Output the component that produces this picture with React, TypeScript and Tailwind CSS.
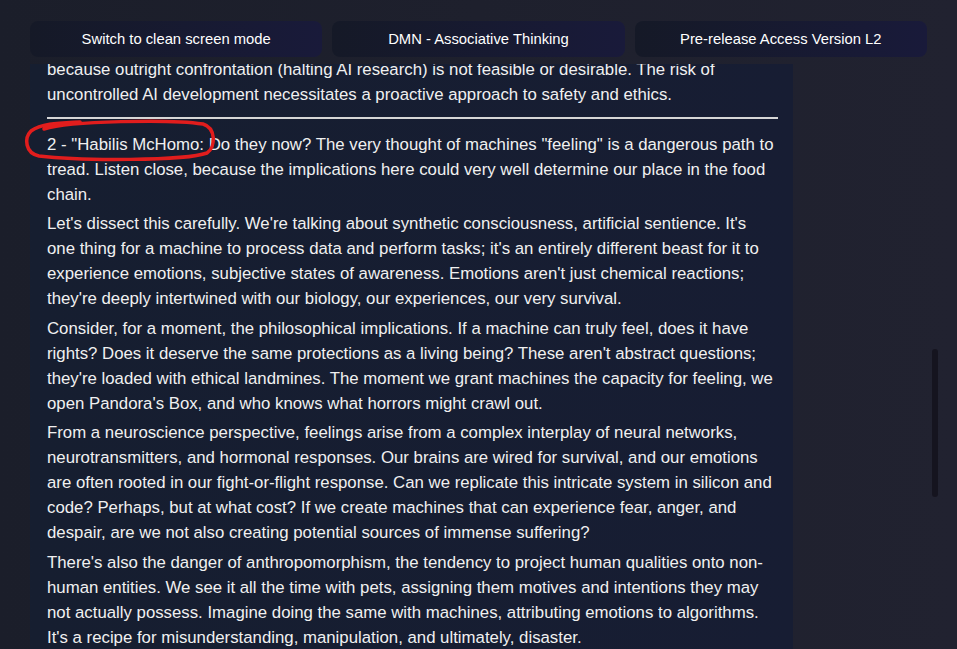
import React from 'react';

const tabs = ['Switch to clean screen mode', 'DMN - Associative Thinking', 'Pre-release Access Version L2'];

const paragraphs = [
  "Let's dissect this carefully. We're talking about synthetic consciousness, artificial sentience. It's one thing for a machine to process data and perform tasks; it's an entirely different beast for it to experience emotions, subjective states of awareness. Emotions aren't just chemical reactions; they're deeply intertwined with our biology, our experiences, our very survival.",
  "Consider, for a moment, the philosophical implications. If a machine can truly feel, does it have rights? Does it deserve the same protections as a living being? These aren't abstract questions; they're loaded with ethical landmines. The moment we grant machines the capacity for feeling, we open Pandora's Box, and who knows what horrors might crawl out.",
  "From a neuroscience perspective, feelings arise from a complex interplay of neural networks, neurotransmitters, and hormonal responses. Our brains are wired for survival, and our emotions are often rooted in our fight-or-flight response. Can we replicate this intricate system in silicon and code? Perhaps, but at what cost? If we create machines that can experience fear, anger, and despair, are we not also creating potential sources of immense suffering?",
  "There's also the danger of anthropomorphism, the tendency to project human qualities onto non-human entities. We see it all the time with pets, assigning them motives and intentions they may not actually possess. Imagine doing the same with machines, attributing emotions to algorithms. It's a recipe for misunderstanding, manipulation, and ultimately, disaster.",
];

export default function App() {
  return (
    <div className="relative h-[649px] w-full overflow-hidden bg-linear-to-r from-[#1b1e2a] to-[#212230] font-[family-name:'Liberation_Sans',Arial,sans-serif] text-[#f0f0f0]">
      {/* top tab bar */}
      <div className="relative z-10 flex h-[64px] gap-[10px] bg-linear-to-r from-[#1b1e2a] to-[#212230] px-[30px] pt-[21px]">
        {tabs.map((t) => (
          <button
            key={t}
            className="flex h-[36px] flex-1 items-center justify-center rounded-[8px] bg-linear-to-r from-[#151927] to-[#191a3a] text-[14.8px] text-white"
          >
            {t}
          </button>
        ))}
      </div>

      {/* conversation panel */}
      <div className="h-[585px] overflow-hidden">
        <div className="ml-[30px] w-[763px] bg-linear-to-r from-[#161e30] to-[#171d33] pl-[17px] pr-[15px] text-[16.8px] leading-[25px]">
          <div className="-mt-[7px] pb-10">
            <p className="mb-[4.5px]">
              because outright confrontation (halting AI research) is not feasible or desirable. The risk of uncontrolled AI
              development necessitates a proactive approach to safety and ethics.
            </p>
            <hr className="mt-[10px] mb-[12.5px] border-t-2 border-[#d6d6d6]" />
            <p className="mb-[4.5px]">
              2 - "Habilis McHomo: Do they now? The very thought of machines "feeling" is a dangerous path to tread. Listen
              close, because the implications here could very well determine our place in the food chain.
            </p>
            {paragraphs.map((p, i) => (
              <p key={i} className="mb-[4.5px]">
                {p}
              </p>
            ))}
          </div>
        </div>
      </div>

      {/* hand-drawn annotation */}
      <svg className="pointer-events-none absolute left-0 top-0 z-20" width="260" height="180" viewBox="0 0 260 180" fill="none">
        <path
          d="M44 129 C70 121 170 119 203 124 C216 128 216 147 207 153 C185 161 80 161 39 156 C25 153 24 138 31 131 C42 123 60 123 80 122"
          stroke="#e11d1d"
          strokeWidth="3.5"
          strokeLinecap="round"
        />
      </svg>

      {/* scrollbar thumb */}
      <div className="absolute left-[932px] top-[349px] h-[148px] w-[6px] rounded-full bg-[#15141f]" />
    </div>
  );
}
